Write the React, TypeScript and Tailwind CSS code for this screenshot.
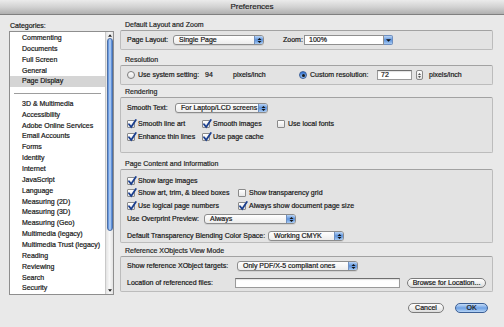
import React from 'react';

const categoriesTop = ['Commenting', 'Documents', 'Full Screen', 'General', 'Page Display'];
const categoriesRest = [
  '3D & Multimedia',
  'Accessibility',
  'Adobe Online Services',
  'Email Accounts',
  'Forms',
  'Identity',
  'Internet',
  'JavaScript',
  'Language',
  'Measuring (2D)',
  'Measuring (3D)',
  'Measuring (Geo)',
  'Multimedia (legacy)',
  'Multimedia Trust (legacy)',
  'Reading',
  'Reviewing',
  'Search',
  'Security',
];

function Check({ on }: { on?: boolean }) {
  return (
    <span className="relative w-[8px] h-[8px] shrink-0 border border-[#8a8a8a] bg-gradient-to-b from-white to-[#e6e6e6] rounded-[1px] mr-[3px]">
      {on && (
        <svg viewBox="0 0 10 10" className="absolute left-[-1px] top-[-2px] w-[10px] h-[10px]">
          <path d="M2 5.2 L4.2 8 L8.8 1" fill="none" stroke="#1b3f8e" strokeWidth="1.8" strokeLinecap="round" />
        </svg>
      )}
    </span>
  );
}

function Radio({ on }: { on?: boolean }) {
  return on ? (
    <span className="w-[8px] h-[8px] shrink-0 rounded-full bg-gradient-to-b from-[#2f6fd0] to-[#9cc4f2] border border-[#3a5f9a] flex items-center justify-center mr-[3px]">
      <span className="w-[3px] h-[3px] rounded-full bg-[#1a1a1a]" />
    </span>
  ) : (
    <span className="w-[8px] h-[8px] shrink-0 rounded-full bg-gradient-to-b from-white to-[#e2e2e2] border border-[#7d7d7d] mr-[3px]" />
  );
}

function Popup({ label, w }: { label: string; w: string }) {
  return (
    <div className={`${w} h-[10px] flex rounded-[3px] border border-[#8c8c8c] overflow-hidden bg-gradient-to-b from-white to-[#ececec] shadow-[0_1px_0_rgba(0,0,0,0.08)]`}>
      <span className="flex-1 pl-[5px] leading-[8px] whitespace-nowrap overflow-hidden">{label}</span>
      <span className="w-[9px] border-l border-[#6f8fbf] bg-gradient-to-b from-[#b9d4f5] via-[#5d93dc] to-[#a9cbf3] flex flex-col items-center justify-center gap-[1px]">
        <svg viewBox="0 0 6 3" className="w-[5px] h-[2px]"><path d="M0 3 L3 0 L6 3Z" fill="#111" /></svg>
        <svg viewBox="0 0 6 3" className="w-[5px] h-[2px]"><path d="M0 0 L3 3 L6 0Z" fill="#111" /></svg>
      </span>
    </div>
  );
}

function Field({ w, value }: { w: string; value?: string }) {
  return (
    <div className={`${w} h-[10px] bg-white border border-[#9a9a9a] border-t-[#6f6f6f] pl-[3px] leading-[8px] shadow-[inset_0_1px_1px_rgba(0,0,0,0.12)]`}>
      {value}
    </div>
  );
}

function Pill({ children, w, blue }: { children: React.ReactNode; w: string; blue?: boolean }) {
  return (
    <div
      className={`${w} h-[10px] rounded-full border flex items-center justify-center leading-[8px] ${
        blue
          ? 'border-[#3b5f95] bg-gradient-to-b from-[#c5dcf7] via-[#6fa2e4] to-[#b5d3f5]'
          : 'border-[#7b7b7b] bg-gradient-to-b from-white via-[#f0f0f0] to-[#dcdcdc]'
      }`}
    >
      {children}
    </div>
  );
}

function Section({ title, h, top, children }: { title: string; h: string; top: string; children: React.ReactNode }) {
  return (
    <div className={top}>
      <div className="h-[11px] leading-[11px] pl-[5px] text-[#2a2a2a]">{title}</div>
      <div className={`${h} border border-[#bcbcbc] border-t-[#a2a2a2] rounded-[2px] bg-[#e3e3e3] pl-[6px] flex flex-col`}>{children}</div>
    </div>
  );
}

function Row({ children, mt }: { children: React.ReactNode; mt: string }) {
  return <div className={`h-[10px] flex items-center whitespace-nowrap ${mt}`}>{children}</div>;
}

function Cell({ w, children }: { w: string; children: React.ReactNode }) {
  return <div className={`${w} shrink-0 flex items-center`}>{children}</div>;
}

export default function App() {
  return (
    <div
      className="w-[504px] h-[327px] bg-[#e9e9e9] text-[7px] text-[#111] [-webkit-text-stroke:0.2px_#222] overflow-hidden flex flex-col"
      style={{ fontFamily: '"Liberation Sans", Arial, sans-serif' }}
    >
      {/* title bar */}
      <div className="h-[15px] shrink-0 bg-gradient-to-b from-[#ebebeb] via-[#d2d2d2] to-[#b0b0b0] border-b border-[#808080] flex items-center justify-center text-[8px] text-[#1e1e1e]">
        Preferences
      </div>

      <div className="flex flex-1">
        {/* categories */}
        <div className="w-[120px] shrink-0 pl-[9px]">
          <div className="h-[16px] pt-[5px] leading-[11px] pl-[1px]">Categories:</div>
          <div className="w-[105px] h-[264px] border border-[#8e8e8e] bg-white flex">
            <div className="flex-1 pt-[1px]">
              {categoriesTop.map((c) => (
                <div
                  key={c}
                  className={`h-[10.86px] leading-[10.86px] pl-[12px] ${c === 'Page Display' ? 'bg-[#d5d5d5]' : ''}`}
                >
                  {c}
                </div>
              ))}
              <div className="h-[11.5px] flex items-center px-[4px]">
                <div className="h-[1px] w-full bg-[#9d9d9d]" />
              </div>
              {categoriesRest.map((c) => (
                <div key={c} className="h-[10.86px] leading-[10.86px] pl-[12px]">
                  {c}
                </div>
              ))}
            </div>
            {/* scrollbar */}
            <div className="w-[8px] border-l border-[#c9c9c9] bg-gradient-to-r from-[#e3e3e3] via-[#f8f8f8] to-[#e3e3e3] flex flex-col items-center">
              <svg viewBox="0 0 6 4" className="w-[4px] h-[3px] mt-[2px]"><path d="M0 4 L3 0 L6 4Z" fill="#222" /></svg>
              <div className="w-[6px] h-[193px] mt-[1px] rounded-full border border-[#4c6fa6] bg-gradient-to-r from-[#4f86d8] via-[#c4dbf8] to-[#3f7bd2]" />
              <div className="flex-1" />
              <svg viewBox="0 0 6 4" className="w-[4px] h-[3px] mb-[2px]"><path d="M0 0 L3 4 L6 0Z" fill="#222" /></svg>
            </div>
          </div>
        </div>

        {/* panels */}
        <div className="w-[373px] shrink-0 flex flex-col">
          <Section title="Default Layout and Zoom" h="h-[20px]" top="mt-[4px]">
            <Row mt="mt-[4px]">
              <Cell w="w-[46px]">Page Layout:</Cell>
              <Popup label="Single Page" w="w-[91px]" />
              <div className="w-[19px]" />
              <Cell w="w-[21px]">Zoom:</Cell>
              <div className="w-[80px] h-[10px] bg-white border border-[#8f8f8f] pl-[4px] leading-[8px]">100%</div>
              <div className="w-[9px] h-[10px] border border-l-0 border-[#6f8fbf] rounded-r-[2px] bg-gradient-to-b from-[#b9d4f5] via-[#5d93dc] to-[#a9cbf3] flex items-center justify-center">
                <svg viewBox="0 0 6 3" className="w-[5px] h-[3px]"><path d="M0 0 L3 3 L6 0Z" fill="#111" /></svg>
              </div>
            </Row>
          </Section>

          <Section title="Resolution" h="h-[20px]" top="mt-[4px]">
            <Row mt="mt-[4px]">
              <Cell w="w-[78px]">
                <Radio />
                Use system setting:
              </Cell>
              <Cell w="w-[28px]">94</Cell>
              <Cell w="w-[66px]">pixels/inch</Cell>
              <Cell w="w-[78px]">
                <Radio on />
                Custom resolution:
              </Cell>
              <Field w="w-[35px]" value="72" />
              <div className="w-[4px]" />
              <div className="w-[7px] h-[10px] rounded-[2px] border border-[#8a8a8a] bg-gradient-to-b from-white to-[#e0e0e0] flex flex-col items-center justify-center gap-[1px]">
                <svg viewBox="0 0 6 3" className="w-[3px] h-[2px]"><path d="M0 3 L3 0 L6 3Z" fill="#222" /></svg>
                <svg viewBox="0 0 6 3" className="w-[3px] h-[2px]"><path d="M0 0 L3 3 L6 0Z" fill="#222" /></svg>
              </div>
              <div className="w-[6px]" />
              <span>pixels/inch</span>
            </Row>
          </Section>

          <Section title="Rendering" h="h-[56px]" top="mt-[1px]">
            <Row mt="mt-[5px]">
              <Cell w="w-[48px]">Smooth Text:</Cell>
              <Popup label="For Laptop/LCD screens" w="w-[93px]" />
            </Row>
            <Row mt="mt-[6px]">
              <Cell w="w-[75px]">
                <Check on />
                Smooth line art
              </Cell>
              <Cell w="w-[75px]">
                <Check on />
                Smooth images
              </Cell>
              <Cell w="w-[75px]">
                <Check />
                Use local fonts
              </Cell>
            </Row>
            <Row mt="mt-[3px]">
              <Cell w="w-[75px]">
                <Check on />
                Enhance thin lines
              </Cell>
              <Cell w="w-[75px]">
                <Check on />
                Use page cache
              </Cell>
            </Row>
          </Section>

          <Section title="Page Content and Information" h="h-[74px]" top="mt-[5px]">
            <Row mt="mt-[6px]">
              <Cell w="w-[111px]">
                <Check on />
                Show large images
              </Cell>
            </Row>
            <Row mt="mt-[2px]">
              <Cell w="w-[111px]">
                <Check on />
                Show art, trim, &amp; bleed boxes
              </Cell>
              <Cell w="w-[120px]">
                <Check />
                Show transparency grid
              </Cell>
            </Row>
            <Row mt="mt-[3px]">
              <Cell w="w-[111px]">
                <Check on />
                Use logical page numbers
              </Cell>
              <Cell w="w-[130px]">
                <Check on />
                Always show document page size
              </Cell>
            </Row>
            <Row mt="mt-[3px]">
              <Cell w="w-[77px]">Use Overprint Preview:</Cell>
              <Popup label="Always" w="w-[92px]" />
            </Row>
            <Row mt="mt-[7px]">
              <Cell w="w-[141px]">Default Transparency Blending Color Space:</Cell>
              <Popup label="Working CMYK" w="w-[76px]" />
            </Row>
          </Section>

          <Section title="Reference XObjects View Mode" h="h-[36px]" top="mt-[2px]">
            <Row mt="mt-[4px]">
              <Cell w="w-[110px]">Show reference XObject targets:</Cell>
              <Popup label="Only PDF/X-5 compliant ones" w="w-[121px]" />
            </Row>
            <Row mt="mt-[7px]">
              <Cell w="w-[108px]">Location of referenced files:</Cell>
              <Field w="w-[165px]" />
              <div className="w-[7px]" />
              <Pill w="w-[79px]">Browse for Location...</Pill>
            </Row>
          </Section>

          <div className="flex justify-end mt-[11px] pr-[5px] gap-[11px]">
            <Pill w="w-[36px]">Cancel</Pill>
            <Pill w="w-[33px]" blue>
              OK
            </Pill>
          </div>
        </div>
      </div>
    </div>
  );
}
